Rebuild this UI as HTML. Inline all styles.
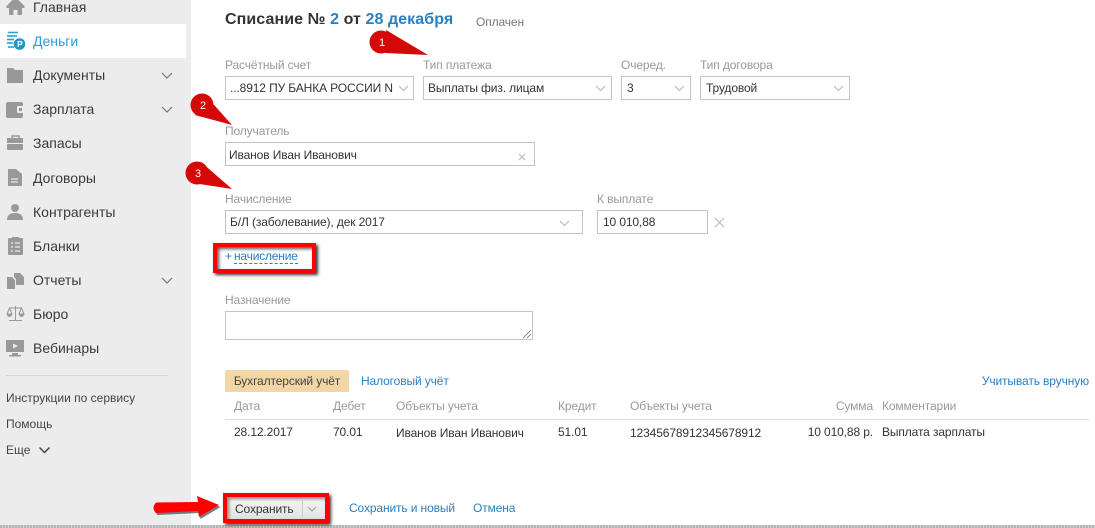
<!DOCTYPE html>
<html><head><meta charset="utf-8">
<style>
html,body{margin:0;padding:0;background:#fff}
#p{position:relative;width:1095px;height:528px;overflow:hidden;background:#fff;font-family:"Liberation Sans",sans-serif;font-size:12px;letter-spacing:-.12px;color:#333}
#p div,#p span.a,#p svg{position:absolute}
.t{white-space:nowrap;line-height:14px}
.m{font-size:14px;line-height:16px;color:#3a3a3a;left:33px;white-space:nowrap;letter-spacing:0}
.s{letter-spacing:0}
.l{color:#999;font-size:12px}
.b{border:1px solid #c4c4c4;box-sizing:border-box;background:#fff;height:24px;line-height:22px;padding-left:5px;white-space:nowrap;overflow:hidden;color:#333}
.h{color:#999}
.lk{color:#2a7fc0}
</style></head><body>
<div id="p">
<div style="left:0;top:0;width:191px;height:528px;background:#ececec"></div>
<div style="left:0;top:24px;width:186px;height:34px;background:#fff"></div>
<div style="left:0;top:525px;width:1095px;height:3px;background:repeating-linear-gradient(90deg,#b5b5b5 0 2px,#cfcfcf 2px 3px)"></div>

<svg style="left:6px;top:0" width="19" height="16" viewBox="0 0 19 16"><path d="M9.500 -3L0.500 6V8H3V15H7.500V10H11.500V15H16V8H18.500V6Z" fill="#999"/></svg>
<svg style="left:5px;top:31px" width="20" height="20" viewBox="0 0 20 20"><g stroke="#2a9fd0" stroke-width="1.600" fill="none"><path d="M3 1.500H13"/><path d="M2 5H12"/><path d="M2 8.500H9"/><path d="M2 12H8"/><path d="M3 16H9"/></g><circle cx="14.500" cy="13" r="5.800" fill="#1f94c8"/><path d="M13.200 16V10.500H15.500a1.500 1.500 0 0 1 0 3H13.200" stroke="#fff" stroke-width="1.200" fill="none"/></svg>
<svg style="left:6px;top:68px" width="18" height="15" viewBox="0 0 18 15"><path d="M1 0H7L9 2H17V15H1Z" fill="#999"/></svg>
<svg style="left:6px;top:102px" width="18" height="16" viewBox="0 0 18 16"><rect x="0" y="0" width="17" height="16" rx="2" fill="#999"/><rect x="11" y="4" width="7" height="7" rx="1" fill="#ececec"/><rect x="13" y="6" width="3" height="3" fill="#999"/></svg>
<svg style="left:7px;top:135px" width="17" height="16" viewBox="0 0 17 16"><path d="M5 3V1H12V3" fill="none" stroke="#999" stroke-width="1.500"/><rect x="0" y="3" width="16" height="5" fill="#999"/><rect x="0" y="9" width="16" height="6" rx="1" fill="#999"/></svg>
<svg style="left:8px;top:169px" width="14" height="17" viewBox="0 0 14 17"><path d="M0 0H8L14 5V17H0Z" fill="#999"/><path d="M3 10H10M3 13H10" stroke="#ececec" stroke-width="1.200"/></svg>
<svg style="left:7px;top:204px" width="17" height="16" viewBox="0 0 17 16"><circle cx="8" cy="4" r="4" fill="#999"/><path d="M0 16C0 11 3 9 8 9S16 11 16 16Z" fill="#999"/></svg>
<svg style="left:8px;top:237px" width="15" height="18" viewBox="0 0 15 18"><rect x="0" y="1" width="15" height="17" rx="1" fill="#999"/><rect x="4" y="0" width="7" height="3" fill="#999"/><path d="M3 6H5M7 6H12M3 10H5M7 10H12M3 14H5M7 14H12" stroke="#ececec" stroke-width="1.200"/></svg>
<svg style="left:7px;top:273px" width="17" height="16" viewBox="0 0 17 16"><path d="M0 4H5L8 7V16H0Z" fill="#999"/><path d="M7 0H13L17 4V12H9V6L7 4Z" fill="#999"/></svg>
<svg style="left:6px;top:305px" width="19" height="18" viewBox="0 0 19 18"><g stroke="#999" fill="none"><path d="M9.500 1V15M3 15.500H16M3 3H16M3.500 3L1 9H6ZM15.500 3L13 9H18Z"/></g><path d="M1 9.500a2.500 2.500 0 0 0 5 0ZM13 9.500a2.500 2.500 0 0 0 5 0Z" fill="#999"/></svg>
<svg style="left:6px;top:340px" width="18" height="17" viewBox="0 0 18 17"><rect x="0" y="0" width="18" height="12" fill="#999"/><path d="M7 3.500L12 6L7 8.500Z" fill="#ececec"/><rect x="6" y="13" width="6" height="2" fill="#999"/><rect x="3" y="15" width="12" height="1.500" fill="#999"/></svg>

<div class="m" style="top:-1px">Главная</div>
<div class="m" style="top:33px;color:#2a9fd0">Деньги</div>
<div class="m" style="top:67px">Документы</div>
<div class="m" style="top:101px">Зарплата</div>
<div class="m" style="top:135px">Запасы</div>
<div class="m" style="top:170px">Договоры</div>
<div class="m" style="top:204px">Контрагенты</div>
<div class="m" style="top:238px">Бланки</div>
<div class="m" style="top:272px">Отчеты</div>
<div class="m" style="top:306px">Бюро</div>
<div class="m" style="top:340px">Вебинары</div>
<svg style="left:161px;top:72px" width="12" height="8"><path d="M1 1L6 6L11 1" fill="none" stroke="#777" stroke-width="1.200"/></svg>
<svg style="left:161px;top:106px" width="12" height="8"><path d="M1 1L6 6L11 1" fill="none" stroke="#777" stroke-width="1.200"/></svg>
<svg style="left:161px;top:277px" width="12" height="8"><path d="M1 1L6 6L11 1" fill="none" stroke="#777" stroke-width="1.200"/></svg>

<div style="left:6px;top:375px;width:162px;height:1px;background:#d5d5d5"></div>
<div class="t s" style="left:6px;top:391px;color:#444">Инструкции по сервису</div>
<div class="t s" style="left:6px;top:417px;color:#444">Помощь</div>
<div class="t s" style="left:6px;top:443px;color:#444">Еще</div>
<svg style="left:38px;top:446px" width="13" height="9"><path d="M1.500 1.500L6.500 6.500L11.500 1.500" fill="none" stroke="#444" stroke-width="1.500"/></svg>

<div class="t" style="left:225px;top:11px;font-size:16px;line-height:18px;letter-spacing:.08px;font-weight:bold;color:#333">Списание № <span style="color:#2a7fc0">2</span> от <span style="color:#2a7fc0">28 декабря</span></div>
<div class="t" style="left:476px;top:15px;color:#777">Оплачен</div>

<div class="t l" style="left:225px;top:58px">Расчётный счет</div>
<div class="t l" style="left:423px;top:58px">Тип платежа</div>
<div class="t l" style="left:621px;top:58px">Очеред.</div>
<div class="t l" style="left:700px;top:58px">Тип договора</div>
<div class="b" style="left:225px;top:76px;width:189px;padding-left:4px">...8912 ПУ БАНКА РОССИИ N</div>
<div class="b" style="left:423px;top:76px;width:189px;padding-left:4px">Выплаты физ. лицам</div>
<div class="b" style="left:621px;top:76px;width:70px">3</div>
<div class="b" style="left:700px;top:76px;width:150px">Трудовой</div>
<svg style="left:398px;top:85px" width="11" height="7"><path d="M1 1L5.500 5.500L10 1" fill="none" stroke="#bbb" stroke-width="1.200"/></svg>
<svg style="left:595px;top:85px" width="11" height="7"><path d="M1 1L5.500 5.500L10 1" fill="none" stroke="#bbb" stroke-width="1.200"/></svg>
<svg style="left:674px;top:85px" width="11" height="7"><path d="M1 1L5.500 5.500L10 1" fill="none" stroke="#bbb" stroke-width="1.200"/></svg>
<svg style="left:833px;top:85px" width="11" height="7"><path d="M1 1L5.500 5.500L10 1" fill="none" stroke="#bbb" stroke-width="1.200"/></svg>

<div class="t l" style="left:225px;top:124px">Получатель</div>
<div class="b" style="left:225px;top:142px;width:310px;padding-left:3px;line-height:24px">Иванов Иван Иванович</div>
<svg style="left:518px;top:153px" width="8" height="8"><path d="M1 1L7 7M7 1L1 7" stroke="#bbb" stroke-width="1.200"/></svg>

<div class="t l" style="left:225px;top:192px">Начисление</div>
<div class="t l" style="left:597px;top:192px">К выплате</div>
<div class="b" style="left:225px;top:210px;width:358px;padding-left:4px">Б/Л (заболевание), дек 2017</div>
<svg style="left:559px;top:220px" width="11" height="7"><path d="M1 1L5.500 5.500L10 1" fill="none" stroke="#bbb" stroke-width="1.200"/></svg>
<div class="b" style="left:597px;top:210px;width:111px">10 010,88</div>
<svg style="left:714px;top:217px" width="11" height="11"><path d="M1 1L10 10M10 1L1 10" stroke="#bbb" stroke-width="1.200"/></svg>

<div style="left:213px;top:243px;width:103px;height:30px;border:4px solid #f00;box-sizing:border-box;box-shadow:2px 2px 3px #333,inset 2px 2px 3px #555"></div>
<div class="t" style="left:225px;top:249px;color:#2a7fc0;letter-spacing:-.2px">+</div>
<div class="t" style="left:234px;top:249px;color:#2a7fc0;letter-spacing:-.2px;border-bottom:1px dashed #2a7fc0">начисление</div>

<div class="t l" style="left:225px;top:293px">Назначение</div>
<div class="b" style="left:225px;top:311px;width:308px;height:29px"></div>
<svg style="left:522px;top:329px" width="10" height="10"><path d="M1 9L9 1M5 9L9 5" stroke="#666" stroke-width="0.800"/></svg>

<div class="t" style="left:225px;top:370px;width:124px;height:22px;line-height:22px;background:#f2d6a5;border-radius:2px 2px 0 0;text-align:center;color:#444">Бухгалтерский учёт</div>
<div class="t lk" style="left:361px;top:374px">Налоговый учёт</div>
<div class="t lk" style="right:6px;top:374px">Учитывать вручную</div>

<div class="t h" style="left:234px;top:399px">Дата</div>
<div class="t h" style="left:333px;top:399px">Дебет</div>
<div class="t h" style="left:396px;top:399px">Объекты учета</div>
<div class="t h" style="left:558px;top:399px">Кредит</div>
<div class="t h" style="left:630px;top:399px">Объекты учета</div>
<div class="t h" style="right:222px;top:399px">Сумма</div>
<div class="t h" style="left:882px;top:399px">Комментарии</div>
<div style="left:225px;top:419px;width:864px;height:1px;background:#dcdcdc"></div>
<div class="t" style="left:234px;top:425px">28.12.2017</div>
<div class="t" style="left:333px;top:425px">70.01</div>
<div class="t" style="left:396px;top:426px">Иванов Иван Иванович</div>
<div class="t" style="left:558px;top:425px">51.01</div>
<div class="t" style="left:630px;top:426px">12345678912345678912</div>
<div class="t" style="right:222px;top:425px">10 010,88 р.</div>
<div class="t" style="left:882px;top:425px">Выплата зарплаты</div>

<div style="left:223px;top:493px;width:106px;height:30px;border:4px solid #f00;box-sizing:border-box;box-shadow:2px 2px 3px #333"></div>
<div style="left:227px;top:497px;width:98px;height:22px;background:linear-gradient(#f6f6f6,#e2e2e2);box-shadow:inset 2px 2px 3px #888"></div>
<div class="t" style="left:235px;top:502px;color:#333">Сохранить</div>
<div style="left:302px;top:499px;width:1px;height:18px;background:#ccc"></div>
<svg style="left:307px;top:506px" width="10" height="6"><path d="M1 1L5 5L9 1" fill="none" stroke="#999" stroke-width="1"/></svg>
<div class="t lk" style="left:349px;top:501px">Сохранить и новый</div>
<div class="t lk" style="left:473px;top:501px">Отмена</div>

<svg style="left:150px;top:490px" width="74" height="34" viewBox="0 0 74 34"><path d="M6 12.500L48 12L47 6L69 15L49 27L48 21L6 23Q1 18 6 12.500Z" fill="#444" opacity=".7" transform="translate(1.500 2)"/><path d="M6 12.500L48 12L47 6L69 15L49 27L48 21L6 23Q1 18 6 12.500Z" fill="#f00"/></svg>

<svg style="left:0;top:0;pointer-events:none" width="1095" height="528">
<path d="M386 30L428 55L385 53Z" fill="#d40808"/><circle cx="381" cy="42" r="11.500" fill="#d40808"/>
<path d="M207 97L232 125L195 115Z" fill="#d40808"/><circle cx="202" cy="105" r="11.500" fill="#d40808"/>
<path d="M201 162L232 189L193 183Z" fill="#d40808"/><circle cx="197" cy="173" r="11.500" fill="#d40808"/>
<text x="382" y="46" font-family="Liberation Sans" font-size="11" fill="#fff" text-anchor="middle" letter-spacing="0">1</text>
<text x="203" y="109" font-family="Liberation Sans" font-size="11" fill="#fff" text-anchor="middle" letter-spacing="0">2</text>
<text x="198" y="177" font-family="Liberation Sans" font-size="11" fill="#fff" text-anchor="middle" letter-spacing="0">3</text>
</svg>
</div>
</body></html>
